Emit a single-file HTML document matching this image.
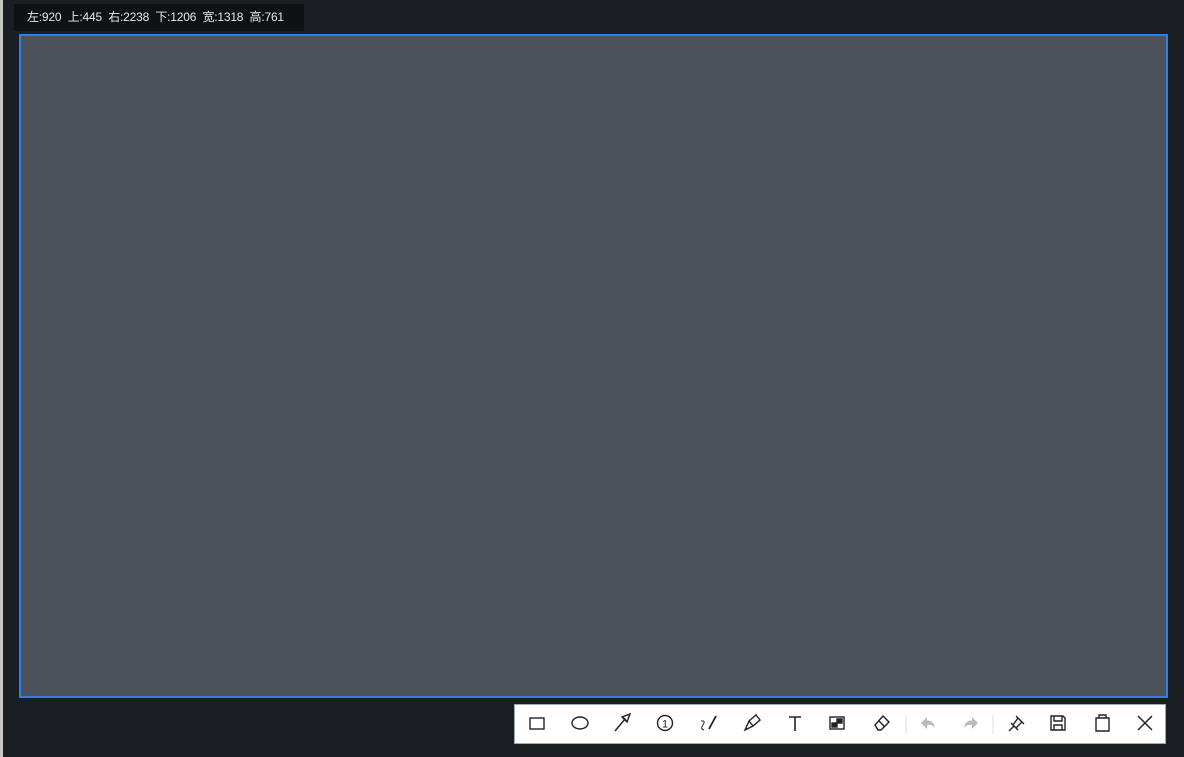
<!DOCTYPE html>
<html><head><meta charset="utf-8"><style>
*{margin:0;padding:0;box-sizing:border-box}
body{width:1184px;height:757px;background:#1b1e22;position:relative;overflow:hidden;font-family:"Liberation Sans","Noto Sans CJK SC",sans-serif}
.edge{position:absolute;left:0;top:0;width:3px;height:757px;background:#c8c8c8}
.lbl{position:absolute;left:14px;top:4px;width:290px;height:27px;background:#0f1113;color:#e8e8e8;font-size:12px;line-height:27px;padding-left:13px;letter-spacing:-0.2px;white-space:nowrap}
.sel{position:absolute;left:19px;top:34px;width:1149px;height:664px;border:2px solid #2f7fe6;background:#4b525a}
.tb{position:absolute;left:514px;top:704px;width:652px;height:40px;background:#fff;border:1px solid #9ab}
.tb svg{position:absolute;top:0;left:0}
</style></head><body>
<div class="edge"></div>
<div class="lbl">左:920 &nbsp;上:445 &nbsp;右:2238 &nbsp;下:1206 &nbsp;宽:1318 &nbsp;高:761</div>
<div class="sel"></div>
<div class="tb">
<svg width="652" height="40" viewBox="514 704 652 40" fill="none" stroke="#222" stroke-width="1.4">
<rect x="529" y="717" width="14" height="11"/>
<ellipse cx="579" cy="722" rx="8" ry="6"/>
<path d="M614 730 L624 718 M621 716 L629 713 L626 721 Z M624 718 L621 716 M624 718 L626 721"/>
<circle cx="664" cy="722" r="7.5"/><text x="664" y="726.5" font-size="11" text-anchor="middle" fill="#222" stroke="none" font-family="Liberation Sans">1</text>
<path d="M708 728 L715 715" stroke-width="1.8"/><path d="M700 720 Q705 719 702 724 Q699 728 703 729" stroke-width="1"/>
<path d="M744 729 L748 720 L755 714 L759 719 L752 725 Z M748 720 L752 725 M744 729 L746 727"/>
<path d="M788 716 H800 M794 716 V730" stroke-width="1.6"/>
<rect x="829" y="716" width="14" height="12"/><rect x="831" y="722" width="5" height="4" fill="#222"/><rect x="836" y="718" width="5" height="4" fill="#222"/>
<path d="M874 724 L882 715 L888 721 L880 729 H877 Z M878 720 L884 726"/>
<path d="M905 714 V733 M992 714 V733" stroke="#ddd" stroke-width="1"/>
<path d="M920 722 L926 716 V719.5 Q933 719.5 934 727 Q931 723 926 724 V728 Z" fill="#bbb" stroke="none"/>
<path d="M977 722 L971 716 V719.5 Q964 719.5 963 727 Q966 723 971 724 V728 Z" fill="#bbb" stroke="none"/>
<path d="M1008 730 L1013 725 M1010 722 L1017 729 M1012 724 L1017 717 L1021 721 L1015 727 M1015 715 L1023 723"/>
<path d="M1050 715 H1062 L1064 717 V729 H1050 Z M1053 715 V720 H1061 V715 M1053 729 V724 H1061 V729"/>
<path d="M1095 717 H1108 V730 H1095 Z M1098 717 V714 H1105 V717"/>
<path d="M1137 715 L1151 729 M1151 715 L1137 729" stroke-width="1.5"/>
</svg>
</div>
</body></html>
